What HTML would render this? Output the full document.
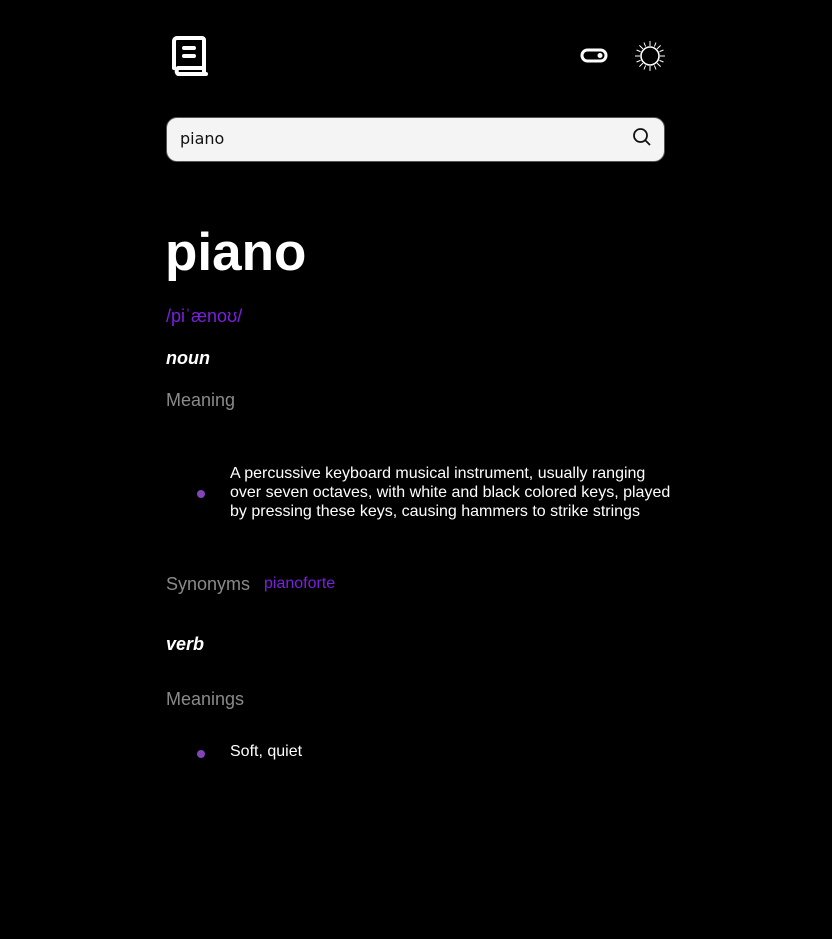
<!DOCTYPE html>
<html><head><meta charset="utf-8"><style>
html,body{margin:0;background:#000;width:832px;height:939px;overflow:hidden;font-family:"Liberation Sans",sans-serif;color:#fff}
.a{position:absolute}
</style></head><body>
<svg class="a" style="left:171px;top:36px" width="38" height="40" viewBox="0 0 38 40" fill="none" stroke="#fff" stroke-width="4" stroke-linecap="round" stroke-linejoin="round">
<path d="M3 32V5a3 3 0 0 1 3-3h25a2 2 0 0 1 2 2v28H7a4 4 0 0 0 0 6h28"/><path d="M33 32v6"/><path d="M13 12h10M13 20h10"/></svg>
<svg class="a" style="left:580px;top:48px" width="28" height="16" viewBox="0 0 28 16" fill="none" stroke="#fff" stroke-width="3"><rect x="2" y="2" width="24" height="11" rx="5.5"/><circle cx="20" cy="7.5" r="2.5" fill="#fff" stroke="none"/></svg>
<svg class="a" style="left:634px;top:40px" width="32" height="32" viewBox="0 0 32 32" fill="none" stroke="#fff" stroke-width="1.2"><circle cx="16" cy="16" r="9" stroke-width="1.6"/>
<g stroke-width="1"><path d="M16 1v5M16 26v5M1 16h5M26 16h5M5.4 5.4l3.5 3.5M23.1 23.1l3.5 3.5M5.4 26.6l3.5-3.5M23.1 8.9l3.5-3.5M10 2.5l1.6 4M20.4 25.5l1.6 4M2.5 22l4-1.6M25.5 11.6l4-1.6M22 2.5l-1.6 4M11.6 25.5l-1.6 4M2.5 10l4 1.6M25.5 20.4l4 1.6"/></g></svg>
<div class="a" style="left:166px;top:117px;width:499px;height:45px;background:#f4f4f4;border-radius:11px;border:1px solid #555;box-sizing:border-box"></div>
<div class="a" style="left:180px;top:129px;color:#111;font-family:'DejaVu Sans',sans-serif;font-size:16px">piano</div>
<svg class="a" style="left:632px;top:127px" width="20" height="20" viewBox="0 0 20 20" fill="none" stroke="#111" stroke-width="1.8"><circle cx="8.5" cy="8.5" r="6.5"/><path d="M13.5 13.5l4.5 4.5"/></svg>
<div class="a" style="left:165px;top:222px;font-size:53px;font-weight:bold">piano</div>
<div class="a" style="left:166px;top:306px;font-size:18px;color:#7b1fe0">/piˈænoʊ/</div>
<div class="a" style="left:166px;top:348px;font-size:18px;font-weight:bold;font-style:italic">noun</div>
<div class="a" style="left:166px;top:390px;font-size:18px;color:#8a8a8a">Meaning</div>
<div class="a" style="left:197px;top:490px;width:8px;height:8px;border-radius:50%;background:#8045b8"></div>
<div class="a" style="left:230px;top:464px;width:460px;white-space:nowrap;font-size:16px;line-height:19px">A percussive keyboard musical instrument, usually ranging<br>over seven octaves, with white and black colored keys, played<br>by pressing these keys, causing hammers to strike strings</div>
<div class="a" style="left:166px;top:574px;font-size:18px;color:#8a8a8a">Synonyms</div>
<div class="a" style="left:264px;top:575px;font-size:16px;color:#7b1fe0">pianoforte</div>
<div class="a" style="left:166px;top:634px;font-size:18px;font-weight:bold;font-style:italic">verb</div>
<div class="a" style="left:166px;top:689px;font-size:18px;color:#8a8a8a">Meanings</div>
<div class="a" style="left:197px;top:750px;width:8px;height:8px;border-radius:50%;background:#8045b8"></div>
<div class="a" style="left:230px;top:743px;font-size:16px">Soft, quiet</div>
</body></html>
